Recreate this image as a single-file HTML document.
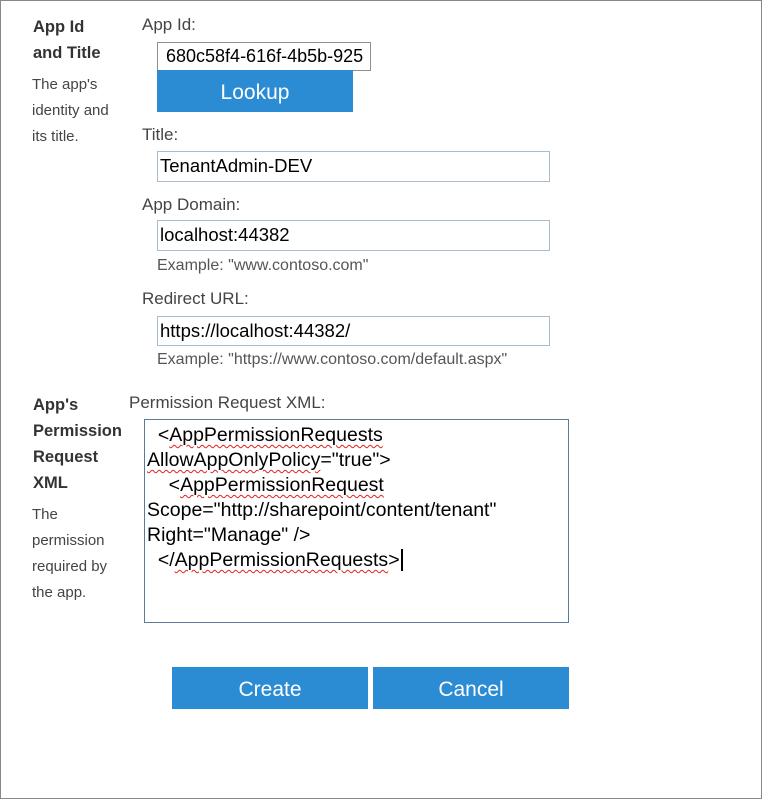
<!DOCTYPE html>
<html><head><meta charset="utf-8"><style>
html,body{margin:0;padding:0;background:#fff;}
body{width:762px;height:799px;position:relative;overflow:hidden;font-family:"Liberation Sans",sans-serif;}
.frame{position:absolute;left:0;top:0;width:760px;height:797px;border:1px solid #888;}
.a{position:absolute;white-space:nowrap;}
.h{font-weight:bold;font-size:16.5px;color:#333;}
.d{font-size:15px;color:#444;}
.l{font-size:17px;color:#444;}
.ex{font-size:16px;color:#555;}
.in{position:absolute;box-sizing:border-box;border:1px solid #a9bcd0;font-size:18.5px;color:#000;padding-left:2px;line-height:28px;overflow:hidden;white-space:nowrap;}
.btn{position:absolute;background:#2b8cd4;color:#fff;font-size:21px;text-align:center;}
.w{text-decoration:underline wavy #e02020;text-decoration-thickness:1px;text-underline-offset:3px;}
.ta{position:absolute;left:144px;top:419px;width:425px;height:204px;box-sizing:border-box;border:1px solid #5a7a9a;font-size:19.5px;line-height:25px;color:#000;padding:3px 0 0 2px;white-space:nowrap;overflow:hidden;}
</style></head><body>
<div class="frame"></div>
<div class="a h" style="left:33px;top:14px;line-height:26px">App Id<br>and Title</div>
<div class="a d" style="left:32px;top:72px;line-height:26px">The app's<br>identity and<br>its title.</div>

<div class="a l" style="left:142px;top:15px">App Id:</div>
<div class="in" style="left:157px;top:42px;width:214px;height:29px;border-color:#8f8f8f;padding-left:8px;line-height:27px;font-size:18px">680c58f4-616f-4b5b-925</div>
<div class="btn" style="left:157px;top:70px;width:196px;height:42px;line-height:46px">Lookup</div>

<div class="a l" style="left:142px;top:125px">Title:</div>
<div class="in" style="left:157px;top:151px;width:393px;height:31px">TenantAdmin-DEV</div>

<div class="a l" style="left:142px;top:195px">App Domain:</div>
<div class="in" style="left:157px;top:220px;width:393px;height:31px">localhost:44382</div>
<div class="a ex" style="left:157px;top:257px">Example: "www.contoso.com"</div>

<div class="a l" style="left:142px;top:289px">Redirect URL:</div>
<div class="in" style="left:157px;top:316px;width:393px;height:30px">https://localhost:44382/</div>
<div class="a ex" style="left:157px;top:351px">Example: "https://www.contoso.com/default.aspx"</div>

<div class="a h" style="left:33px;top:392px;line-height:26px">App's<br>Permission<br>Request<br>XML</div>
<div class="a d" style="left:32px;top:502px;line-height:26px">The<br>permission<br>required by<br>the app.</div>

<div class="a l" style="left:129px;top:393px">Permission Request XML:</div>
<div class="ta">&nbsp;&nbsp;&lt;<span class="w">AppPermissionRequests</span><br><span class="w">AllowAppOnlyPolicy</span>="true"&gt;<br>&nbsp;&nbsp;&nbsp;&nbsp;&lt;<span class="w">AppPermissionRequest</span><br>Scope="http://sharepoint/content/tenant"<br>Right="Manage" /&gt;<br>&nbsp;&nbsp;&lt;/<span class="w">AppPermissionRequests</span>&gt;<span style="border-left:2px solid #000;margin-left:1px"></span></div>

<div class="btn" style="left:172px;top:667px;width:196px;height:42px;line-height:46px">Create</div>
<div class="btn" style="left:373px;top:667px;width:196px;height:42px;line-height:46px">Cancel</div>
</body></html>
